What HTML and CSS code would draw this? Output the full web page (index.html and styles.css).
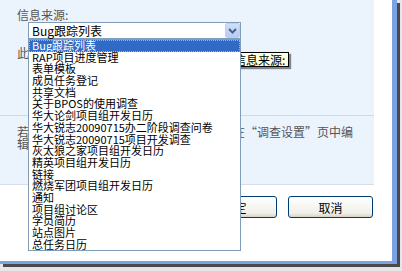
FILE: index.html
```html
<!DOCTYPE html>
<html lang="zh-CN">
<head>
    <meta charset="UTF-8">
    <title>信息来源</title>
    <link rel="stylesheet" href="styles.css">
</head>
<body>
    <div class="dialog">
        <div class="panel">
            <div class="field">
                <div class="label">信息来源:</div>
                <div class="select">
                    <span class="select-value">Bug跟踪列表</span>
                    <span class="select-btn">
                        <svg width="9" height="6" viewBox="0 0 9 6"><path d="M1 1 L4.5 4.5 L8 1" fill="none" stroke="#4d6185" stroke-width="2"/></svg>
                    </span>
                </div>
                <p class="hint">此处选择信息来源列表</p>
            </div>
            <div class="note">
                <p>若要更改此下拉列表中可用信息来源，请在“调查设置”页中编<br>辑。</p>
            </div>
        </div>

        <div class="footer">
            <button class="btn">确定</button>
            <button class="btn">取消</button>
        </div>

        <div class="tooltip">信息来源:</div>

        <ul class="dropdown">
            <li class="selected">Bug跟踪列表</li>
            <li>RAP项目进度管理</li>
            <li>表单模板</li>
            <li>成员任务登记</li>
            <li>共享文档</li>
            <li>关于BPOS的使用调查</li>
            <li>华大论剑项目组开发日历</li>
            <li>华大锐志20090715办二阶段调查问卷</li>
            <li>华大锐志20090715项目开发调查</li>
            <li>灰太狼之家项目组开发日历</li>
            <li>精英项目组开发日历</li>
            <li>链接</li>
            <li>燃烧军团项目组开发日历</li>
            <li>通知</li>
            <li>项目组讨论区</li>
            <li>学员简历</li>
            <li>站点图片</li>
            <li>总任务日历</li>
        </ul>
    </div>
</body>
</html>
```

FILE: styles.css
```css
body {
    margin: 0;
    background-color: #e6e6e6;
    font-family: "Noto Sans CJK SC", sans-serif;
    font-size: 12px;
    width: 402px;
    height: 271px;
    overflow: hidden;
}
.dialog {
    position: relative;
    width: 392px;
    height: 261px;
    background-color: #ffffff;
    border-right: 5px solid #7ba2e7;
    border-bottom: 3px solid #7ba2e7;
    box-shadow: 3px 3px 0 #4a4a4a;
}
.panel {
    width: 374px;
    height: 184px;
    background-color: #ebf3fd;
    border-bottom: 1px solid #d6dee9;
}
.field {
    height: 107px;
    padding: 8px 0 0 17px;
    border-bottom: 1px solid #cfd9e6;
}
.label {
    line-height: 14px;
    color: #555555;
}
.select {
    display: flex;
    box-sizing: border-box;
    width: 213px;
    height: 17px;
    margin-left: 11px;
    border: 1px solid #7f9db9;
    background-color: #ffffff;
}
.select-value {
    flex: 1;
    padding-left: 3px;
    line-height: 15px;
    color: #000000;
}
.select-btn {
    display: flex;
    align-items: center;
    justify-content: center;
    width: 15px;
    background: linear-gradient(#d0defa, #b7cbf5);
    border: 1px solid #bccff5;
    box-sizing: border-box;
    border-radius: 2px;
}
.hint {
    margin: 7px 0 0;
    line-height: 14px;
    color: #555555;
}
.note {
    padding: 10px 0 0 17px;
}
.note p {
    margin: 0;
    line-height: 12px;
    color: #555555;
}
.footer {
    display: flex;
    justify-content: flex-end;
    gap: 11px;
    padding: 11px 19px 0 0;
}
.btn {
    width: 85px;
    height: 22px;
    padding: 0;
    border: 1px solid #003c74;
    border-radius: 3px;
    background: linear-gradient(#ffffff, #f1f0ea 80%, #d8d3c6);
    font-family: "Noto Sans CJK SC", sans-serif;
    font-size: 12px;
    color: #000000;
}
.dropdown {
    position: absolute;
    left: 28px;
    top: 39px;
    width: 211px;
    margin: 0;
    padding: 0;
    list-style: none;
    background-color: #ffffff;
    border: 1px solid #7f9db9;
}
.dropdown li {
    height: 11.7px;
    line-height: 11.7px;
    padding-left: 3px;
    font-size: 11px;
    color: #000000;
    white-space: nowrap;
}
.dropdown li.selected {
    background-color: #316ac5;
    color: #ffffff;
    outline: 1px dotted #c9b070;
    outline-offset: -1px;
}
.tooltip {
    position: absolute;
    left: 230px;
    top: 52px;
    box-sizing: border-box;
    width: 59px;
    height: 15px;
    padding-left: 3px;
    line-height: 13px;
    border: 1px solid #000000;
    background-color: #ffffe1;
    box-shadow: 2px 2px 1px rgba(0, 0, 0, 0.45);
    color: #000000;
}
```
